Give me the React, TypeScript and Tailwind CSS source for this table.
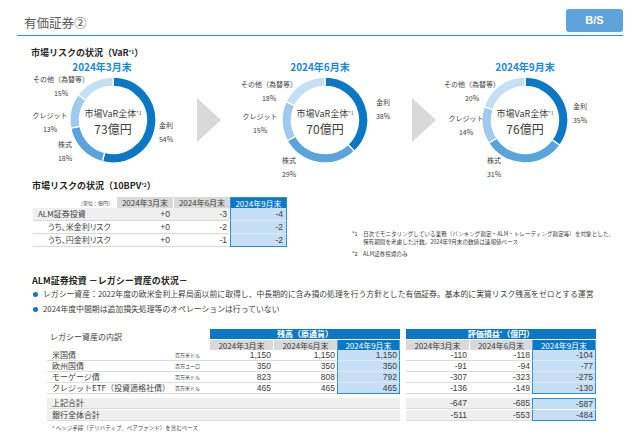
import React from "react"

const COLORS = ["#0b78c6", "#5aa4de", "#9dcaee", "#c5e0f5"]
const NUM = "font-['Liberation_Sans',sans-serif] text-[8.5px]"

type Label = { t: string; p: string; cx: number; y: number }
type Chart = {
  x0: number
  width: string
  title: string
  tcx: number
  cx: number
  total: string
  vals: number[]
  labels: Label[]
}

const ROW_TOP = 59
const CY = 119
const R = 43
const RI = 33.5

const charts: Chart[] = [
  {
    x0: 0,
    width: "w-[196px]",
    title: "2024年3月末",
    tcx: 102,
    cx: 113,
    total: "73億円",
    vals: [54, 18, 13, 15],
    labels: [
      { t: "その他（為替等）", p: "15%", cx: 61, y: 78 },
      { t: "クレジット", p: "13%", cx: 50, y: 114 },
      { t: "株式", p: "18%", cx: 65, y: 143 },
      { t: "金利", p: "54%", cx: 166, y: 124 },
    ],
  },
  {
    x0: 222,
    width: "w-[188px]",
    title: "2024年6月末",
    tcx: 320,
    cx: 325,
    total: "70億円",
    vals: [38, 29, 15, 18],
    labels: [
      { t: "その他（為替等）", p: "18%", cx: 269, y: 83 },
      { t: "クレジット", p: "15%", cx: 260, y: 115 },
      { t: "株式", p: "29%", cx: 289, y: 159 },
      { t: "金利", p: "38%", cx: 383, y: 101 },
    ],
  },
  {
    x0: 436,
    width: "w-[204px]",
    title: "2024年9月末",
    tcx: 525,
    cx: 525,
    total: "76億円",
    vals: [35, 31, 14, 20],
    labels: [
      { t: "その他（為替等）", p: "20%", cx: 472, y: 83 },
      { t: "クレジット", p: "14%", cx: 466, y: 117 },
      { t: "株式", p: "31%", cx: 494, y: 159 },
      { t: "金利", p: "35%", cx: 580, y: 105 },
    ],
  },
]

function sector(c: number, a0: number, a1: number) {
  const pt = (rad: number, a: number) => [
    c + rad * Math.sin(a * 2 * Math.PI),
    c - rad * Math.cos(a * 2 * Math.PI),
  ]
  const large = a1 - a0 > 0.5 ? 1 : 0
  const [x0, y0] = pt(R, a0)
  const [x1, y1] = pt(R, a1)
  const [x2, y2] = pt(RI, a1)
  const [x3, y3] = pt(RI, a0)
  return `M${x0} ${y0}A${R} ${R} 0 ${large} 1 ${x1} ${y1}L${x2} ${y2}A${RI} ${RI} 0 ${large} 0 ${x3} ${y3}Z`
}

function Donut({ vals }: { vals: number[] }) {
  const size = 2 * R + 2
  const tot = vals.reduce((a, b) => a + b, 0)
  let acc = 0
  return (
    <svg width={size} height={size}>
      {vals.map((v, i) => {
        const a0 = acc / tot
        acc += v
        const a1 = acc / tot
        return <path key={i} d={sector(R + 1, a0, a1)} fill={COLORS[i]} stroke="#fff" strokeWidth={1.3} />
      })}
    </svg>
  )
}

function ChartBox({ c }: { c: Chart }) {
  return (
    <div className={`relative h-full shrink-0 ${c.width}`}>
      <div
        className="absolute top-0 w-[100px] text-center text-[10px] leading-[14px] font-bold text-[#1b8ad4]"
        style={{ left: c.tcx - 50 - c.x0 }}
      >
        {c.title}
      </div>
      <div className="absolute" style={{ left: c.cx - R - 1 - c.x0, top: CY - R - 1 - ROW_TOP }}>
        <Donut vals={c.vals} />
      </div>
      <div
        className="absolute w-[80px] flex flex-col items-center text-[#404040]"
        style={{ left: c.cx - 40 - c.x0, top: 106 - ROW_TOP }}
      >
        <div className="text-[9px] leading-[13px] whitespace-nowrap">
          市場VaR全体<span className="relative -top-[2px] text-[5px]">*1</span>
        </div>
        <div className="text-[12px] leading-[16px]">{c.total}</div>
      </div>
      {c.labels.map((l) => (
        <div
          key={l.t}
          className="absolute w-[90px] text-center text-[7px] leading-[14px] text-[#404040]"
          style={{ left: l.cx - 45 - c.x0, top: l.y - 7 - ROW_TOP }}
        >
          <div>{l.t}</div>
          <div>{l.p}</div>
        </div>
      ))}
    </div>
  )
}

function Arrow({ pad }: { pad: string }) {
  return (
    <div className={`w-[26px] h-full shrink-0 flex items-center ${pad}`}>
      <div className="w-0 h-0 border-y-[22px] border-y-transparent border-l-[24px] border-l-[#d9d9d9]" />
    </div>
  )
}

const varRows = [
  { l: "ALM証券投資", v: ["+0", "-3", "-4"], sub: false },
  { l: "うち、米金利リスク", v: ["+0", "-2", "-2"], sub: true },
  { l: "うち、円金利リスク", v: ["+0", "-1", "-2"], sub: true },
]

const legacy = [
  { l: "米国債", u: "百万米ドル", a: ["1,150", "1,150", "1,150"], b: ["-110", "-118", "-104"] },
  { l: "欧州国債", u: "百万ユーロ", a: ["350", "350", "350"], b: ["-91", "-94", "-77"] },
  { l: "モーゲージ債", u: "百万米ドル", a: ["823", "808", "792"], b: ["-307", "-323", "-275"] },
  { l: "クレジットETF（投資適格社債）", u: "百万米ドル", a: ["465", "465", "465"], b: ["-136", "-149", "-130"] },
]

const totals = [
  { l: "上記合計", b: ["-647", "-685", "-587"] },
  { l: "銀行全体合計", b: ["-511", "-553", "-484"] },
]

export default function App() {
  return (
    <div className="w-[640px] h-[443px] overflow-hidden bg-white text-[#404040] font-['Noto_Sans_CJK_JP','Liberation_Sans',sans-serif]">
      {/* header */}
      <div className="mx-[17px] h-[36px] flex items-start justify-between border-b-[1.5px] border-[#1a9be2]">
        <div className="pl-[7px] pt-[17px] text-[12.5px] leading-none text-[#595959]">有価証券②</div>
        <div className="mt-[9px] w-[57px] h-[23px] rounded-[3px] bg-[#5fa3dc] flex items-center justify-center text-white text-[11px] font-bold font-['Liberation_Sans',sans-serif]">
          B/S
        </div>
      </div>

      <div className="mt-[11px] pl-[31px] text-[9px] leading-[12px] font-bold text-[#262626]">
        市場リスクの状況（VaR<span className="relative -top-[2px] text-[5px]">*1</span>）
      </div>

      {/* donuts */}
      <div className="flex h-[120px]">
        <ChartBox c={charts[0]} />
        <Arrow pad="pl-[1px]" />
        <ChartBox c={charts[1]} />
        <Arrow pad="pl-[2px]" />
        <ChartBox c={charts[2]} />
      </div>

      <div className="pl-[32px] text-[9px] leading-[12px] font-bold text-[#262626]">
        市場リスクの状況（10BPV<span className="relative -top-[2px] text-[5px]">*2</span>）
      </div>

      <div className="flex">
        {/* 10BPV table */}
        <div className="ml-[33px] mt-[4px] w-[254px] text-[8px] text-[#404040] whitespace-nowrap">
          <div className="flex h-[11px] leading-[11px]">
            <div className="w-[84px] text-right pr-[4px] text-[5px]">（単位：億円）</div>
            <div className="w-[56px] bg-[#d9d9d9] text-center">2024年3月末</div>
            <div className="w-[57px] bg-[#d9d9d9] text-center border-l border-white">2024年6月末</div>
            <div className="w-[57px] bg-[#0b78c6] text-white text-center border-x border-t border-[#2b8fd8]">2024年9月末</div>
          </div>
          {varRows.map((r, i) => (
            <div key={r.l} className="flex h-[13px] leading-[12px]">
              <div
                className={`w-[197px] flex border-b border-[#d9d9d9] ${i === 0 ? "bg-[#efefef]" : "bg-white"}`}
              >
                <div className={`w-[84px] [font-feature-settings:'palt'] ${r.sub ? "pl-[15px]" : "pl-[5px]"}`}>{r.l}</div>
                <div className={`w-[56px] text-right pr-[3px] ${NUM}`}>{r.v[0]}</div>
                <div className={`w-[57px] text-right pr-[3px] ${NUM}`}>{r.v[1]}</div>
              </div>
              <div
                className={`w-[57px] bg-[#c6dff5] text-right pr-[3px] border-x border-[#2b8fd8] ${NUM} ${i === 2 ? "border-b" : "border-b border-b-[#dbe9f6]"}`}
              >
                {r.v[2]}
              </div>
            </div>
          ))}
        </div>

        {/* notes */}
        <div className="ml-[65px] mt-[37px] text-[5.6px] leading-[8px] text-[#404040] whitespace-nowrap">
          <div className="flex">
            <span className="w-[11px]">*1</span>
            <span>
              日次でモニタリングしている業務（バンキング勘定・ALM・トレーディング勘定等）を対象とした、
              <br />
              保有期間を考慮した計数。2024年9月末の数値は速報値ベース
            </span>
          </div>
          <div className="flex mt-[4px]">
            <span className="w-[11px]">*2</span>
            <span>ALM証券投資のみ</span>
          </div>
        </div>
      </div>

      {/* ALM */}
      <div className="mt-[17px] pl-[32px] text-[9px] leading-[12px] font-bold text-[#262626]">
        ALM証券投資 －レガシー資産の状況－
      </div>
      <div className="mt-[1px] pl-[33px] text-[7.85px] leading-[12px] whitespace-nowrap">
        <div className="flex items-center">
          <span className="w-[5px] h-[5px] rounded-full bg-[#0b78c6] mr-[5px]" />
          レガシー資産：2022年度の欧米金利上昇局面以前に取得し、中長期的に含み損の処理を行う方針とした有価証券。基本的に実質リスク残高をゼロとする運営
        </div>
        <div className="flex items-center mt-[3px]">
          <span className="w-[5px] h-[5px] rounded-full bg-[#0b78c6] mr-[5px]" />
          2024年度中間期は追加損失処理等のオペレーションは行っていない
        </div>
      </div>

      {/* legacy table */}
      <div className="mt-[14px] ml-[47px] text-[8px] text-[#404040] whitespace-nowrap">
        <div className="flex h-[10px] leading-[10px]">
          <div className="w-[163px] pl-[3px] pt-[2px] leading-[12px]">レガシー資産の内訳</div>
          <div className="w-[190px] bg-[#0b78c6] text-white text-center font-bold">残高（原通貨）</div>
          <div className="w-[6px]" />
          <div className="w-[190px] bg-[#0b78c6] text-white text-center font-bold">
            評価損益<span className="relative -top-[2px] text-[5px]">*</span>（億円）
          </div>
        </div>
        <div className="flex h-[11px] leading-[11px] border-t border-white">
          <div className="w-[163px]" />
          <div className="w-[63px] bg-[#d9d9d9] text-center">2024年3月末</div>
          <div className="w-[64px] bg-[#d9d9d9] text-center border-l border-white">2024年6月末</div>
          <div className="w-[63px] bg-[#0b78c6] text-white text-center border-x border-[#5aa4de]">2024年9月末</div>
          <div className="w-[6px]" />
          <div className="w-[63px] bg-[#d9d9d9] text-center">2024年3月末</div>
          <div className="w-[63px] bg-[#d9d9d9] text-center border-l border-white">2024年6月末</div>
          <div className="w-[64px] bg-[#0b78c6] text-white text-center border-x border-[#5aa4de]">2024年9月末</div>
        </div>
        {legacy.map((r, i) => {
          const last = i === legacy.length - 1
          const blue = `bg-[#c6dff5] text-right pr-[2px] border-x border-[#2b8fd8] ${NUM} ${last ? "border-b" : "border-b border-b-[#dbe9f6]"}`
          return (
            <div key={r.l} className="flex h-[11px] leading-[10px]">
              <div className="w-[290px] flex border-b border-[#dcdcdc]">
                <div className="w-[125px] pl-[5px]">{r.l}</div>
                <div className="w-[38px] text-[5px] leading-[10px] pl-[3px]">{r.u}</div>
                <div className={`w-[63px] text-right pr-[2px] ${NUM}`}>{r.a[0]}</div>
                <div className={`w-[64px] text-right pr-[2px] ${NUM}`}>{r.a[1]}</div>
              </div>
              <div className={`w-[63px] ${blue}`}>{r.a[2]}</div>
              <div className="w-[6px]" />
              <div className="w-[126px] flex border-b border-[#dcdcdc]">
                <div className={`w-[63px] text-right pr-[2px] ${NUM}`}>{r.b[0]}</div>
                <div className={`w-[63px] text-right pr-[2px] ${NUM}`}>{r.b[1]}</div>
              </div>
              <div className={`w-[64px] ${blue}`}>{r.b[2]}</div>
            </div>
          )
        })}
        <div className="h-[4px]" />
        {totals.map((r, i) => (
          <div key={r.l} className={`flex h-[11px] leading-[10px] ${i === 1 ? "mt-[1px]" : ""}`}>
            <div className="w-[353px] bg-[#efefef] pl-[5px] border-b border-[#dcdcdc]">{r.l}</div>
            <div className="w-[6px]" />
            <div className="w-[126px] flex bg-[#efefef] border-b border-[#dcdcdc]">
              <div className={`w-[63px] text-right pr-[2px] ${NUM}`}>{r.b[0]}</div>
              <div className={`w-[63px] text-right pr-[2px] ${NUM}`}>{r.b[1]}</div>
            </div>
            <div
              className={`w-[64px] bg-[#c6dff5] text-right pr-[2px] border-x border-[#2b8fd8] ${NUM} ${i === 0 ? "border-t" : "border-b"}`}
            >
              {r.b[2]}
            </div>
          </div>
        ))}
        <div className="mt-[3px] pl-[5px] text-[5.5px] leading-[8px]">* ヘッジ手段（デリバティブ、ペアファンド）を含むベース</div>
      </div>
    </div>
  )
}
